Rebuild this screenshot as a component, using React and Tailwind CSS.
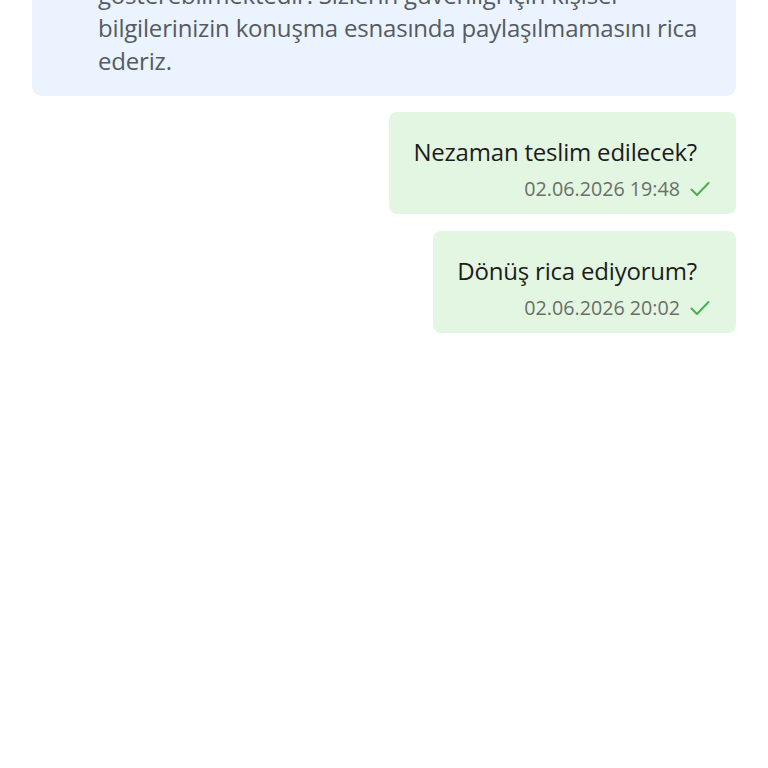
export default function App() {
  const messages = [
    { text: 'Nezaman teslim edilecek?', time: '02.06.2026 19:48' },
    { text: 'Dönüş rica ediyorum?', time: '02.06.2026 20:02' },
  ];

  const notice = [
    'Bu kanal üzerinden yapılan yazışmalar kayıt altına',
    'gösterebilmektedir. Sizlerin güvenliği için kişisel',
    'bilgilerinizin konuşma esnasında paylaşılmamasını rica',
    'ederiz.',
  ];

  return (
    <div className="min-h-screen bg-white font-['Open_Sans',sans-serif]">
      <div className="px-[32px] flex flex-col">
        <div className="-mt-[65px] rounded-b-[10px] bg-[#eaf3fe] pl-[66px] pr-[30px] pt-[10px] pb-[19px] text-[24px] leading-[33px] tracking-[-0.18px] text-[#555b61]">
          {notice.map(l => (
            <div key={l} className="whitespace-nowrap">{l}</div>
          ))}
        </div>

        <div className="mt-[16px] flex flex-col items-end gap-[17px]">
          {messages.map(m => (
            <div key={m.time} className="rounded-[8px] bg-[#e3f6e1] pl-[24px] pr-[24px] pt-[24px] pb-[12px] flex flex-col items-end">
              <div className="mr-[15px] text-[24px] leading-[32px] tracking-[-0.2px] text-[#1c1c1c]">{m.text}</div>
              <div className="mt-[8px] flex items-center gap-[8px] text-[19.7px] leading-[26px] text-[#6b6e6b]">
                <span>{m.time}</span>
                <svg width="24" height="24" viewBox="0 0 24 24" fill="none" stroke="#4caf50" strokeWidth="2" strokeLinecap="round" strokeLinejoin="round">
                  <path d="M3.5 12.5l5.5 5.5L20.5 6" />
                </svg>
              </div>
            </div>
          ))}
        </div>
      </div>
    </div>
  );
}
